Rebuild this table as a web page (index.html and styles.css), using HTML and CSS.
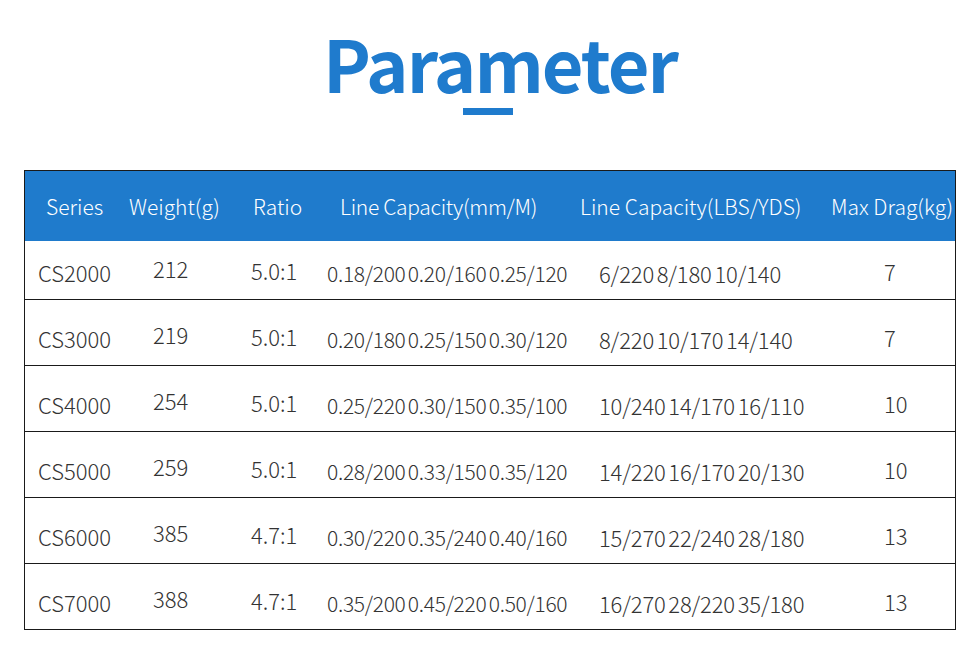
FILE: index.html
```html
<!DOCTYPE html>
<html lang="en">
<head>
<meta charset="utf-8">
<title>Parameter</title>
<link rel="stylesheet" href="styles.css">
</head>
<body>
<div class="page">
  <header class="title-block">
    <h1 class="title">Parameter</h1>
    <div class="title-bar"></div>
  </header>
  <div class="table">
    <div class="row head">
      <div class="cell c1">Series</div>
      <div class="cell c2">Weight(g)</div>
      <div class="cell c3">Ratio</div>
      <div class="cell c4">Line Capacity(mm/M)</div>
      <div class="cell c5">Line Capacity(LBS/YDS)</div>
      <div class="cell c6">Max Drag(kg)</div>
    </div>
    <div class="row body first">
      <div class="cell c1">CS2000</div>
      <div class="cell c2">212</div>
      <div class="cell c3">5.0:1</div>
      <div class="cell c4">0.18/200 0.20/160 0.25/120</div>
      <div class="cell c5">6/220 8/180 10/140</div>
      <div class="cell c6">7</div>
    </div>
    <div class="row body">
      <div class="cell c1">CS3000</div>
      <div class="cell c2">219</div>
      <div class="cell c3">5.0:1</div>
      <div class="cell c4">0.20/180 0.25/150 0.30/120</div>
      <div class="cell c5">8/220 10/170 14/140</div>
      <div class="cell c6">7</div>
    </div>
    <div class="row body">
      <div class="cell c1">CS4000</div>
      <div class="cell c2">254</div>
      <div class="cell c3">5.0:1</div>
      <div class="cell c4">0.25/220 0.30/150 0.35/100</div>
      <div class="cell c5">10/240 14/170 16/110</div>
      <div class="cell c6">10</div>
    </div>
    <div class="row body">
      <div class="cell c1">CS5000</div>
      <div class="cell c2">259</div>
      <div class="cell c3">5.0:1</div>
      <div class="cell c4">0.28/200 0.33/150 0.35/120</div>
      <div class="cell c5">14/220 16/170 20/130</div>
      <div class="cell c6">10</div>
    </div>
    <div class="row body">
      <div class="cell c1">CS6000</div>
      <div class="cell c2">385</div>
      <div class="cell c3">4.7:1</div>
      <div class="cell c4">0.30/220 0.35/240 0.40/160</div>
      <div class="cell c5">15/270 22/240 28/180</div>
      <div class="cell c6">13</div>
    </div>
    <div class="row body">
      <div class="cell c1">CS7000</div>
      <div class="cell c2">388</div>
      <div class="cell c3">4.7:1</div>
      <div class="cell c4">0.35/200 0.45/220 0.50/160</div>
      <div class="cell c5">16/270 28/220 35/180</div>
      <div class="cell c6">13</div>
    </div>
  </div>
</div>
</body>
</html>
```

FILE: styles.css
```css
* { box-sizing: border-box; }
html, body { margin: 0; padding: 0; background: #fff; }
body {
  font-family: "Noto Sans CJK SC", "Noto Sans", sans-serif;
  width: 980px;
  height: 650px;
  overflow: hidden;
}
.title-block {
  height: 170px;
  display: flex;
  flex-direction: column;
  align-items: center;
}
.title {
  margin: 0;
  padding-top: 12px;
  font-family: "Noto Sans CJK SC", "Noto Sans", sans-serif;
  font-weight: 700;
  font-size: 72px;
  line-height: 100px;
  color: #1f7bcd;
  letter-spacing: -2px;
  padding-left: 20px;
}
.title-bar {
  width: 50px;
  height: 7px;
  background: #1f7bcd;
  margin-top: -4px;
  margin-left: -5px;
}
.table {
  margin-left: 24px;
  width: 932px;
  border: 1.5px solid #1a1a1a;
}
.row {
  display: grid;
  grid-template-columns: 96px 125px 75px 250px 255px 1fr;
}
.head {
  background: #1f7bcc;
  color: #fff;
  height: 70px;
  align-items: center;
  font-size: 21px;
  font-weight: 300;
}
.body {
  height: 66px;
  border-top: 1px solid #1a1a1a;
  align-items: end;
  font-size: 22px;
  font-weight: 300;
  color: #333;
  line-height: 26px;
}
.head + .body { border-top: none; height: 58px; }
.cell { white-space: pre; }
.head .c1 { padding-left: 21px; }
.head .c2 { padding-left: 8px; }
.head .c3 { padding-left: 7px; }
.head .c4 { padding-left: 19px; letter-spacing: -0.3px; }
.head .c5 { padding-left: 9px; }
.head .c6 { padding-left: 5px; }
.body .c1 { padding-left: 13px; padding-bottom: 14px; }
.body .c2 { padding-left: 32px; padding-bottom: 18px; }
.body .c3 { padding-left: 5px; padding-bottom: 16px; }
.body .c4 { padding-left: 6px; padding-bottom: 13px; font-size: 21px; letter-spacing: -0.3px; word-spacing: -2px; }
.body .c5 { padding-left: 28px; padding-bottom: 13px; letter-spacing: -0.15px; word-spacing: -2px; }
.body .c6 { padding-left: 58px; padding-bottom: 15px; }
```
